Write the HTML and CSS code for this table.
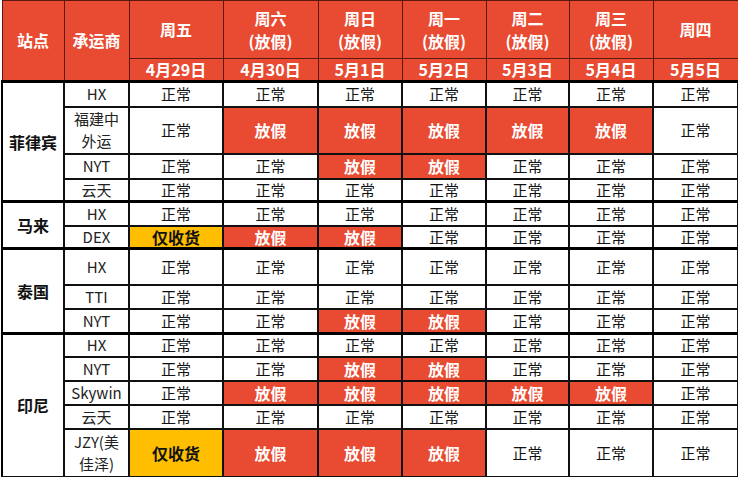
FILE: index.html
```html
<!DOCTYPE html>
<html>
<head>
<meta charset="utf-8">
<link rel="stylesheet" href="styles.css">
</head>
<body>
<table class="sched">
  <colgroup>
    <col class="c-site"><col class="c-car"><col class="c-d1"><col class="c-d2"><col class="c-d3"><col class="c-d4"><col class="c-d5"><col class="c-d6"><col class="c-d7">
  </colgroup>
  <thead>
    <tr class="h-top">
      <th rowspan="2">站点</th>
      <th rowspan="2">承运商</th>
      <th>周五</th>
      <th>周六<br>(放假)</th>
      <th>周日<br>(放假)</th>
      <th>周一<br>(放假)</th>
      <th>周二<br>(放假)</th>
      <th>周三<br>(放假)</th>
      <th>周四</th>
    </tr>
    <tr class="h-date">
      <th>4月29日</th><th>4月30日</th><th>5月1日</th><th>5月2日</th><th>5月3日</th><th>5月4日</th><th>5月5日</th>
    </tr>
  </thead>
  <tbody class="grp">
    <tr class="r25">
      <td rowspan="4" class="site">菲律宾</td>
      <td class="car">HX</td>
      <td>正常</td><td>正常</td><td>正常</td><td>正常</td><td>正常</td><td>正常</td><td>正常</td>
    </tr>
    <tr class="r47">
      <td class="car two">福建中<br>外运</td>
      <td>正常</td><td class="off">放假</td><td class="off">放假</td><td class="off">放假</td><td class="off">放假</td><td class="off">放假</td><td>正常</td>
    </tr>
    <tr class="r25">
      <td class="car">NYT</td>
      <td>正常</td><td>正常</td><td class="off">放假</td><td class="off">放假</td><td>正常</td><td>正常</td><td>正常</td>
    </tr>
    <tr class="r23">
      <td class="car">云天</td>
      <td>正常</td><td>正常</td><td>正常</td><td>正常</td><td>正常</td><td>正常</td><td>正常</td>
    </tr>
  </tbody>
  <tbody class="grp">
    <tr class="r24">
      <td rowspan="2" class="site">马来</td>
      <td class="car">HX</td>
      <td>正常</td><td>正常</td><td>正常</td><td>正常</td><td>正常</td><td>正常</td><td>正常</td>
    </tr>
    <tr class="r23">
      <td class="car">DEX</td>
      <td class="recv">仅收货</td><td class="off">放假</td><td class="off">放假</td><td>正常</td><td>正常</td><td>正常</td><td>正常</td>
    </tr>
  </tbody>
  <tbody class="grp">
    <tr class="r36">
      <td rowspan="3" class="site">泰国</td>
      <td class="car">HX</td>
      <td>正常</td><td>正常</td><td>正常</td><td>正常</td><td>正常</td><td>正常</td><td>正常</td>
    </tr>
    <tr class="r24">
      <td class="car">TTI</td>
      <td>正常</td><td>正常</td><td>正常</td><td>正常</td><td>正常</td><td>正常</td><td>正常</td>
    </tr>
    <tr class="r25">
      <td class="car">NYT</td>
      <td>正常</td><td>正常</td><td class="off">放假</td><td class="off">放假</td><td>正常</td><td>正常</td><td>正常</td>
    </tr>
  </tbody>
  <tbody class="grp">
    <tr class="r23">
      <td rowspan="5" class="site">印尼</td>
      <td class="car">HX</td>
      <td>正常</td><td>正常</td><td>正常</td><td>正常</td><td>正常</td><td>正常</td><td>正常</td>
    </tr>
    <tr class="r24">
      <td class="car">NYT</td>
      <td>正常</td><td>正常</td><td class="off">放假</td><td class="off">放假</td><td>正常</td><td>正常</td><td>正常</td>
    </tr>
    <tr class="r24">
      <td class="car">Skywin</td>
      <td>正常</td><td class="off">放假</td><td class="off">放假</td><td class="off">放假</td><td class="off">放假</td><td class="off">放假</td><td>正常</td>
    </tr>
    <tr class="r24">
      <td class="car">云天</td>
      <td>正常</td><td>正常</td><td>正常</td><td>正常</td><td>正常</td><td>正常</td><td>正常</td>
    </tr>
    <tr class="r48">
      <td class="car two">JZY(美<br>佳泽)</td>
      <td class="recv">仅收货</td><td class="off">放假</td><td class="off">放假</td><td class="off">放假</td><td>正常</td><td>正常</td><td>正常</td>
    </tr>
  </tbody>
</table>
</body>
</html>
```

FILE: styles.css
```css
html, body {
  margin: 0;
  padding: 0;
  background: #ffffff;
}

body {
  font-family: "Noto Sans CJK SC", "Noto Sans", sans-serif;
  color: #111;
}

.sched {
  border-collapse: collapse;
  table-layout: fixed;
  width: 736px;
  margin-left: 1px;
}

.c-site { width: 62px; }
.c-car { width: 65px; }
.c-d1 { width: 94px; }
.c-d2 { width: 95px; }
.c-d3 { width: 84px; }
.c-d4 { width: 84px; }
.c-d5 { width: 83px; }
.c-d6 { width: 84px; }
.c-d7 { width: 85px; }

.sched th,
.sched td {
  padding: 0;
  text-align: center;
  vertical-align: middle;
  overflow: hidden;
  white-space: nowrap;
}

.sched th {
  background: #e84b31;
  color: #fff;
  font-weight: 700;
  font-size: 16px;
  line-height: 23px;
  border: 1px solid #5a1a10;
}

.h-top { height: 58px; }
.h-date { height: 23px; }
.h-date th { font-size: 16px; line-height: 19px; }

.sched td {
  border: 2px solid #111;
  font-size: 15px;
  line-height: 18px;
  color: #111;
}

.sched tbody.grp {
  border-top: 3px solid #000;
}

.sched td.site {
  font-size: 16px;
  font-weight: 700;
  border-left: 2px solid #000;
}

.sched td.car {
  font-size: 15px;
  color: #222;
}

.sched td.car.two {
  line-height: 22px;
}

.sched td.off {
  background: #e84b31;
  color: #fff;
  font-weight: 700;
  font-size: 16px;
}

.sched td.recv {
  background: #ffbf00;
  color: #111;
  font-weight: 700;
  font-size: 16px;
}

.r23 { height: 23px; }
.r24 { height: 24px; }
.r25 { height: 25px; }
.r36 { height: 36px; }
.r47 { height: 47px; }
.r48 { height: 48px; }
```
